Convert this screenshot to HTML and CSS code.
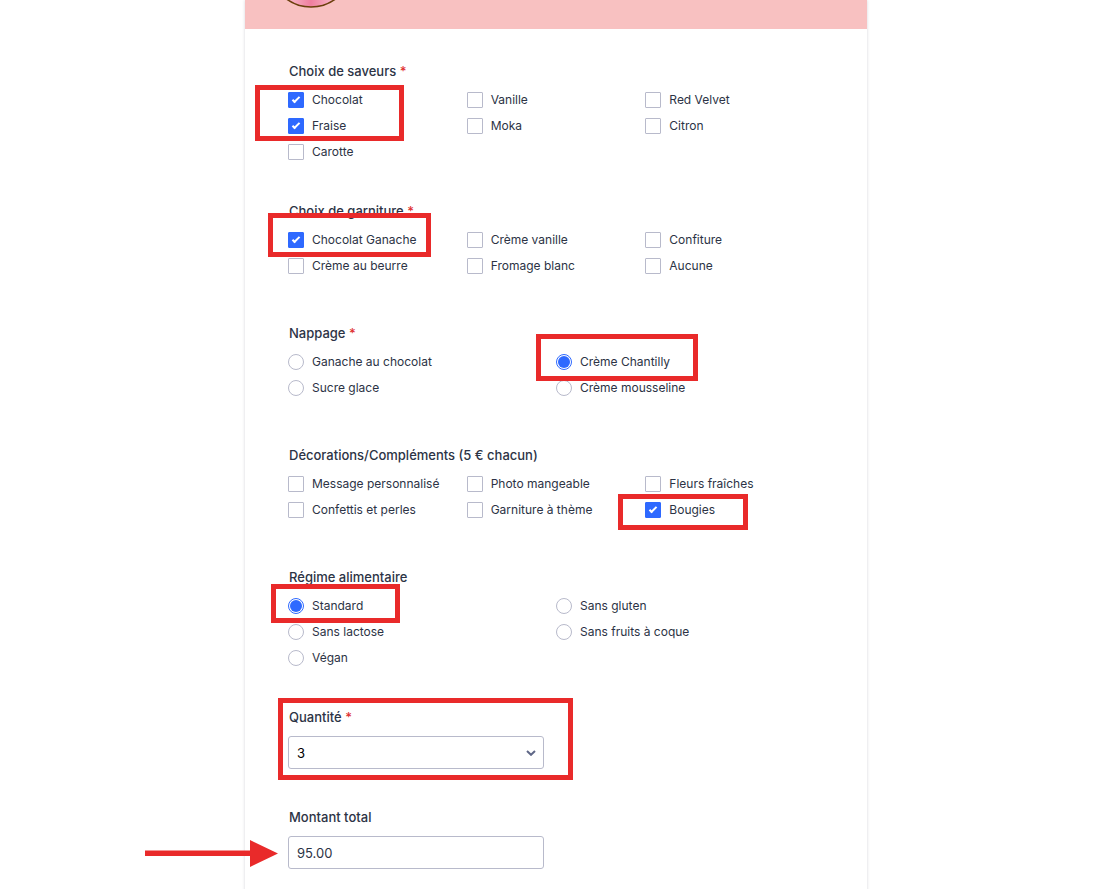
FILE: index.html
```
<!DOCTYPE html>
<html lang="fr">
<head>
    <meta charset="UTF-8">
    <meta name="viewport" content="width=device-width, initial-scale=1.0">
    <title>Commande de gâteau</title>
    <link rel="stylesheet" href="styles.css">
</head>
<body>

    <form class="form">
        <!-- Header band with the bottom of the logo -->
        <header class="form-header">
            <svg class="logo" viewBox="0 0 84 8" aria-hidden="true">
                <defs>
                    <linearGradient id="logo-fill">
                        <stop offset="0.25" stop-color="#f7b3c4"/>
                        <stop offset="0.5" stop-color="#ef7f9f"/>
                        <stop offset="0.75" stop-color="#f7b3c4"/>
                    </linearGradient>
                </defs>
                <circle cx="42" cy="-34" r="41" fill="url(#logo-fill)" stroke="#6b3f0c" stroke-width="1.6"/>
            </svg>
        </header>

        <div class="form-body">
            <!-- Flavours -->
            <fieldset class="group">
                <legend>Choix de saveurs <span class="required">*</span></legend>
                <div class="options three">
                    <label><input type="checkbox" name="saveur" checked>Chocolat</label>
                    <label><input type="checkbox" name="saveur">Vanille</label>
                    <label><input type="checkbox" name="saveur">Red Velvet</label>
                    <label><input type="checkbox" name="saveur" checked>Fraise</label>
                    <label><input type="checkbox" name="saveur">Moka</label>
                    <label><input type="checkbox" name="saveur">Citron</label>
                    <label><input type="checkbox" name="saveur">Carotte</label>
                </div>
                <div class="mark mark-saveurs"></div>
            </fieldset>

            <!-- Filling -->
            <fieldset class="group">
                <legend>Choix de garniture <span class="required">*</span></legend>
                <div class="options three">
                    <label><input type="checkbox" name="garniture" checked>Chocolat Ganache</label>
                    <label><input type="checkbox" name="garniture">Crème vanille</label>
                    <label><input type="checkbox" name="garniture">Confiture</label>
                    <label><input type="checkbox" name="garniture">Crème au beurre</label>
                    <label><input type="checkbox" name="garniture">Fromage blanc</label>
                    <label><input type="checkbox" name="garniture">Aucune</label>
                </div>
                <div class="mark mark-garniture"></div>
            </fieldset>

            <!-- Topping -->
            <fieldset class="group">
                <legend>Nappage <span class="required">*</span></legend>
                <div class="options two">
                    <label><input type="radio" name="nappage">Ganache au chocolat</label>
                    <label><input type="radio" name="nappage" checked>Crème Chantilly</label>
                    <label><input type="radio" name="nappage">Sucre glace</label>
                    <label><input type="radio" name="nappage">Crème mousseline</label>
                </div>
                <div class="mark mark-nappage"></div>
            </fieldset>

            <!-- Decorations -->
            <fieldset class="group">
                <legend>Décorations/Compléments (5 € chacun)</legend>
                <div class="options three">
                    <label><input type="checkbox" name="decoration">Message personnalisé</label>
                    <label><input type="checkbox" name="decoration">Photo mangeable</label>
                    <label><input type="checkbox" name="decoration">Fleurs fraîches</label>
                    <label><input type="checkbox" name="decoration">Confettis et perles</label>
                    <label><input type="checkbox" name="decoration">Garniture à thème</label>
                    <label><input type="checkbox" name="decoration" checked>Bougies</label>
                </div>
                <div class="mark mark-decorations"></div>
            </fieldset>

            <!-- Diet -->
            <fieldset class="group">
                <legend>Régime alimentaire</legend>
                <div class="options two">
                    <label><input type="radio" name="regime" checked>Standard</label>
                    <label><input type="radio" name="regime">Sans gluten</label>
                    <label><input type="radio" name="regime">Sans lactose</label>
                    <label><input type="radio" name="regime">Sans fruits à coque</label>
                    <label><input type="radio" name="regime">Végan</label>
                </div>
                <div class="mark mark-regime"></div>
            </fieldset>

            <!-- Quantity -->
            <div class="field">
                <label for="quantite">Quantité <span class="required">*</span></label>
                <div class="select-wrap">
                    <select id="quantite">
                        <option>1</option>
                        <option>2</option>
                        <option selected>3</option>
                        <option>4</option>
                        <option>5</option>
                    </select>
                    <svg class="chevron" viewBox="0 0 10 6" aria-hidden="true">
                        <path d="M1 1l4 3.8L9 1" fill="none" stroke="#5f6787" stroke-width="2"/>
                    </svg>
                </div>
                <div class="mark mark-quantite"></div>
            </div>

            <!-- Total -->
            <div class="field">
                <label for="total">Montant total</label>
                <input type="text" id="total" value="95.00">
                <svg class="arrow" viewBox="0 0 133 28" aria-hidden="true">
                    <path d="M0 11.5h105V1l28 13.5L105 28V17H0z" fill="#e92a2a"/>
                </svg>
            </div>
        </div>
    </form>

</body>
</html>
```
FILE: styles.css
```
* { box-sizing: border-box; }
body { font-family: Inter, "Liberation Sans", sans-serif; font-size: 13px; line-height: 16px; color: #2c3345; background: #fff; margin: 0; padding-right: 4px; }

.form { max-width: 622px; min-height: 100vh; margin: 0 auto; background: #fff; box-shadow: 0 0 3px rgba(44, 51, 69, 0.2); }
.form-header { height: 29px; padding-left: 24px; background: #f8c1c1; }
.logo { display: block; width: 84px; height: 8px; }
.form-body { padding: 34px 43px 19px; }

/* Option groups */
.group { position: relative; min-width: 0; min-height: 122px; margin: 0; padding: 0 0 43px; border: 0; }
.group legend { padding: 0 1px; margin-bottom: 13px; }
.group legend, .field > label { font-weight: 500; }
.required { color: #e03131; }
.options { display: grid; row-gap: 10px; font-size: 12px; }
.three { grid-template-columns: repeat(3, 1fr); }
.two { grid-template-columns: repeat(2, 1fr); }
.options label { display: flex; align-items: center; gap: 8px; }

.options input { appearance: none; display: grid; place-items: center; flex: none; width: 16px; height: 16px; margin: 0; border: 1px solid #b8bacb; background: #fff; }
input[type="checkbox"] { border-radius: 1px; }
input[type="radio"] { border-radius: 50%; }
input[type="checkbox"]:checked { background: #2e69ff; border-color: #2e69ff; }
input[type="checkbox"]:checked::after { content: ""; width: 2px; height: 6px; margin-bottom: 2px; border: solid #fff; border-width: 0 2px 2px 0; transform: rotate(45deg); }
input[type="radio"]:checked { border-color: #2e69ff; }
input[type="radio"]:checked::after { content: ""; width: 12px; height: 12px; border-radius: 50%; background: #2e69ff; }

/* Single fields */
.field { position: relative; padding-bottom: 40px; }
.field > label { display: block; padding: 0 1px; margin-bottom: 11px; }
.select-wrap { position: relative; width: 256px; }
.field select, .field input { appearance: none; display: block; width: 256px; height: 33px; padding: 0 8px; border: 1px solid #b8bacb; border-radius: 3px; background: #fff; font: inherit; color: #2c3345; }
.field select { color: #000; }
.chevron { position: absolute; right: 8px; top: 14px; width: 10px; height: 6px; }

/* Red annotations over the form */
.mark { position: absolute; border: 5px solid #e92a2a; pointer-events: none; }
.mark-saveurs { left: -33px; top: -7px; width: 149px; height: 56px; }
.mark-garniture { left: -20px; top: -19px; width: 163px; height: 44px; }
.mark-nappage { left: 248px; top: -20px; width: 162px; height: 47px; }
.mark-decorations { left: 330px; top: 18px; width: 130px; height: 36px; }
.mark-regime { left: -17px; top: -14px; width: 129px; height: 39px; }
.mark-quantite { left: -10px; top: -11px; width: 295px; height: 82px; }
.arrow { position: absolute; left: -143px; top: 30px; width: 133px; height: 28px; }
```
